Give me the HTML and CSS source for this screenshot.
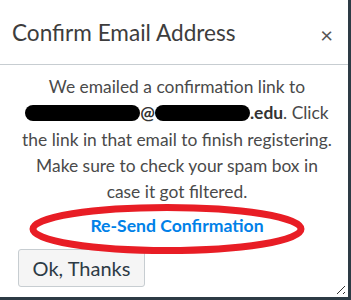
FILE: index.html
```html
<!DOCTYPE html>
<html lang="en">
<head>
    <meta charset="UTF-8">
    <meta name="viewport" content="width=device-width, initial-scale=1.0">
    <title>Confirm Email Address</title>
    <link rel="stylesheet" href="styles.css">
</head>
<body>
    <div class="dialog">
        <div class="dialog-header">
            <h1>Confirm Email Address</h1>
            <span class="close">&times;</span>
        </div>
        <div class="dialog-body">
            <p>We emailed a confirmation link to <strong><span class="redact r1"></span>@<span class="redact r2"></span>.edu</strong>. Click the link in that email to finish registering. Make sure to check your spam box in case it got filtered.</p>
            <a class="resend" href="#">Re-Send Confirmation</a>
            <button class="button">Ok, Thanks</button>
            <svg class="circle" width="300" height="60" viewBox="0 0 300 60">
                <ellipse cx="150" cy="30" rx="134" ry="21.5" fill="none" stroke="#e81d25" stroke-width="7"/>
            </svg>
        </div>
        <span class="grip"></span>
    </div>
</body>
</html>
```
FILE: styles.css
```css
body {
    margin: 0;
    background: #2d3b45;
    font-family: Lato, "Open Sans", sans-serif;
    width: 351px;
    height: 300px;
    overflow: hidden;
}
.dialog {
    position: relative;
    background: white;
    width: 348px;
    height: 297px;
}
.dialog-header {
    display: flex;
    align-items: center;
    justify-content: space-between;
    height: 65px;
    padding: 0 12px;
    border-bottom: 1px solid #c7cdd1;
    box-sizing: border-box;
}
.dialog-header h1 {
    margin: 0;
    font-size: 22.6px;
    font-weight: normal;
    color: #3d3d3d;
}
.close {
    font-size: 22px;
    color: #555;
    margin-right: 3px;
    margin-top: 4px;
}
.dialog-body {
    position: relative;
    padding: 9px 12px 0 18px;
    text-align: center;
}
.dialog-body p {
    margin: 0;
    font-size: 17.4px;
    line-height: 26.3px;
    color: #4a4a4a;
}
.dialog-body strong {
    color: #333;
}
.redact {
    display: inline-block;
    background: black;
    height: 16px;
    border-radius: 8px;
    vertical-align: -2px;
}
.r1 { width: 115px; }
.r2 { width: 95px; }
.resend {
    display: block;
    margin-top: 9px;
    font-size: 17.6px;
    font-weight: bold;
    color: #0081e8;
    text-decoration: none;
    line-height: 24px;
}
.button {
    display: block;
    margin-top: 11px;
    background: #f5f5f5;
    border: 1px solid #c7cdd1;
    border-radius: 3px;
    color: #2d3b45;
    font-family: Lato, "Open Sans", sans-serif;
    font-size: 20px;
    padding: 0;
    height: 38px;
    width: 127px;
}
.circle {
    position: absolute;
    left: 17px;
    top: 134px;
}
.grip {
    position: absolute;
    right: 3px;
    bottom: 3px;
    width: 12px;
    height: 12px;
    background: repeating-linear-gradient(135deg, transparent 0 3px, #333 3px 4px);
    clip-path: polygon(100% 0, 100% 100%, 0 100%);
}
```
